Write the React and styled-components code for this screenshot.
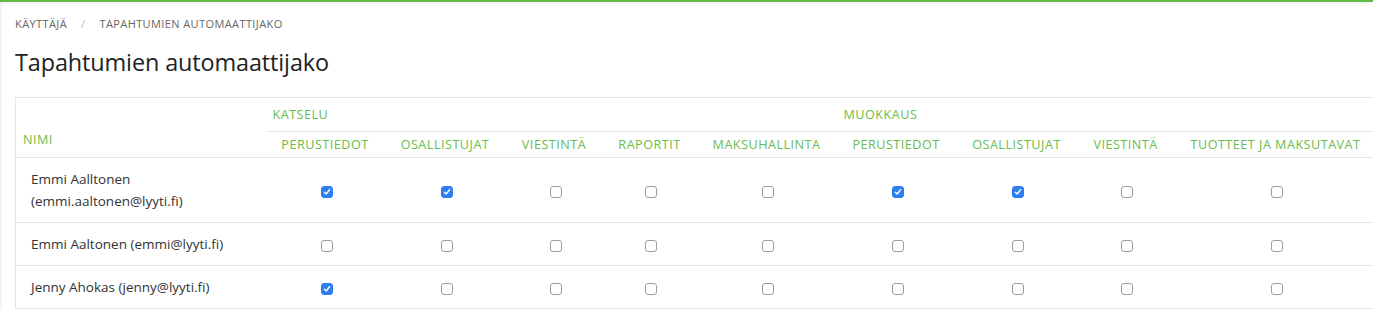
import React from 'react';
import styled, { createGlobalStyle } from 'styled-components';

const GlobalStyle = createGlobalStyle`
  html, body {
    margin: 0;
    padding: 0;
    background: #fff;
    overflow: hidden;
  }
  body {
    font-family: "Open Sans", "Noto Sans", Arial, sans-serif;
    color: #333;
  }
`;

const columns = [
  { key: 'k-perus', label: 'Perustiedot', width: 119 },
  { key: 'k-osal', label: 'Osallistujat', width: 121 },
  { key: 'k-viest', label: 'Viestintä', width: 97 },
  { key: 'k-rap', label: 'Raportit', width: 94 },
  { key: 'k-maksu', label: 'Maksuhallinta', width: 140 },
  { key: 'm-perus', label: 'Perustiedot', width: 119 },
  { key: 'm-osal', label: 'Osallistujat', width: 122 },
  { key: 'm-viest', label: 'Viestintä', width: 96 },
  { key: 'm-tuot', label: 'Tuotteet ja maksutavat', width: 204 },
];

const users = [
  { id: 1, name: 'Emmi Aalltonen (emmi.aaltonen@lyyti.fi)', checked: [true, true, false, false, false, true, true, false, false] },
  { id: 2, name: 'Emmi Aaltonen (emmi@lyyti.fi)', checked: [false, false, false, false, false, false, false, false, false] },
  { id: 3, name: 'Jenny Ahokas (jenny@lyyti.fi)', checked: [true, false, false, false, false, false, false, false, false] },
];

const Page = styled.div`
  position: relative;
  min-height: 310px;
  border-top: 2px solid #5fbb46;
  box-shadow: inset 3px 0 3px -2px rgba(0, 0, 0, 0.08);
  &::before {
    content: '';
    position: absolute;
    left: 0;
    right: 0;
    top: 0;
    height: 4px;
    background: linear-gradient(rgba(0, 0, 0, 0.05), rgba(0, 0, 0, 0));
  }
`;

const Content = styled.div`
  padding: 14px 0 0 15px;
`;

const Breadcrumb = styled.div`
  display: flex;
  align-items: center;
  gap: 14px;
  font-size: 11px;
  letter-spacing: 0.4px;
  text-transform: uppercase;
  color: #666;
  line-height: 16px;
`;

const Separator = styled.span`
  color: #bbb;
`;

const Title = styled.h1`
  margin: 15px 0 0;
  font-size: 23.4px;
  font-weight: 400;
  color: #222;
  line-height: 30px;
  letter-spacing: -0.1px;
`;

const Table = styled.table`
  margin-top: 20px;
  border-collapse: collapse;
  table-layout: fixed;
  width: 1362px;
  border-top: 1px solid #e6e6e6;
  border-left: 1px solid #e6e6e6;
`;

const HeadCell = styled.th`
  font-weight: 400;
  font-size: 12.6px;
  letter-spacing: 0.5px;
  text-transform: uppercase;
  color: #68bc4b;
  padding: 0;
  white-space: nowrap;
  text-align: ${(p) => p.$align || 'center'};
  vertical-align: ${(p) => p.$valign || 'middle'};
`;

const NameHead = styled(HeadCell)`
  padding: 0 0 9px 7px;
  border-bottom: 1px solid #e6e6e6;
`;

const GroupHead = styled(HeadCell)`
  height: 33px;
  padding: 0 7px;
  border-bottom: 1px solid #e6e6e6;
`;

const ColHead = styled(HeadCell)`
  height: 25px;
  border-bottom: 1px solid #e6e6e6;
`;

const Row = styled.tr`
  border-bottom: 1px solid #e6e6e6;
`;

const NameCell = styled.td`
  padding: 10px 15px 10px 15px;
  font-size: 13.5px;
  line-height: 22px;
  color: #333;
`;

const BoxCell = styled.td`
  text-align: center;
  vertical-align: middle;
  padding: 0 0 0 3px;
`;

const Box = styled.span`
  display: inline-flex;
  align-items: center;
  justify-content: center;
  width: 12px;
  height: 12px;
  box-sizing: border-box;
  border-radius: 3px;
  vertical-align: middle;
  background: ${(p) => (p.$checked ? '#2d7ff0' : '#fff')};
  border: 1px solid ${(p) => (p.$checked ? '#2d7ff0' : '#9d9d9d')};
`;

const Checkbox = ({ checked }) => (
  <Box $checked={checked}>
    {checked && (
      <svg width="8" height="8" viewBox="0 0 8 8">
        <path d="M1.4 4.3 L3.2 6 L6.6 1.6" fill="none" stroke="#fff" strokeWidth="1.4" strokeLinecap="round" strokeLinejoin="round" />
      </svg>
    )}
  </Box>
);

export default function App() {
  return (
    <Page>
      <GlobalStyle />
      <Content>
        <Breadcrumb>
          <span>Käyttäjä</span>
          <Separator>/</Separator>
          <span>Tapahtumien automaattijako</span>
        </Breadcrumb>
        <Title>Tapahtumien automaattijako</Title>
        <Table>
          <colgroup>
            <col style={{ width: 250 }} />
            {columns.map((c) => (
              <col key={c.key} style={{ width: c.width }} />
            ))}
          </colgroup>
          <thead>
            <tr>
              <NameHead rowSpan={2} $align="left" $valign="bottom">Nimi</NameHead>
              <GroupHead colSpan={5} $align="left">Katselu</GroupHead>
              <GroupHead colSpan={4} $align="left">Muokkaus</GroupHead>
            </tr>
            <tr>
              {columns.map((c) => (
                <ColHead key={c.key}>{c.label}</ColHead>
              ))}
            </tr>
          </thead>
          <tbody>
            {users.map((u) => (
              <Row key={u.id}>
                <NameCell>{u.name}</NameCell>
                {u.checked.map((v, i) => (
                  <BoxCell key={columns[i].key}>
                    <Checkbox checked={v} />
                  </BoxCell>
                ))}
              </Row>
            ))}
          </tbody>
        </Table>
      </Content>
    </Page>
  );
}
